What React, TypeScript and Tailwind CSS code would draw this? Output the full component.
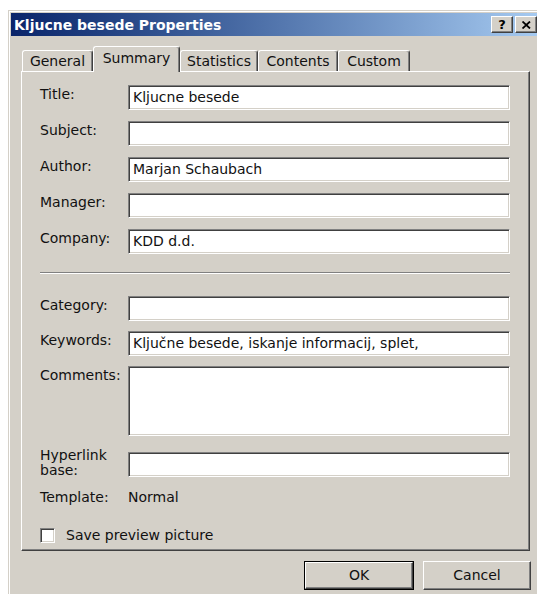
import React from "react";

// classic 3D bevels
const raised =
  "border border-t-white border-l-white border-r-[#404040] border-b-[#404040] shadow-[inset_-1px_-1px_0_#808080,inset_1px_1px_0_#d4d0c8]";
const sunken =
  "border border-t-[#808080] border-l-[#808080] border-r-white border-b-white shadow-[inset_1px_1px_0_#404040,inset_-1px_-1px_0_#d4d0c8]";

const Field = ({ label, value }: { label: string; value?: string }) => (
  <div className="flex items-start">
    <span className="w-[88px] pt-[1px] leading-[17px]">{label}</span>
    <div className={`${sunken} w-[382px] h-[25px] bg-white pl-[4px] leading-[23px] whitespace-nowrap`}>
      {value}
    </div>
  </div>
);

const tabs = ["General", "Summary", "Statistics", "Contents", "Custom"];
const tabWidths: Record<string, string> = {
  General: "w-[71px]",
  Summary: "w-[87px]",
  Statistics: "w-[78px]",
  Contents: "w-[80px]",
  Custom: "w-[72px]",
};

export default function App() {
  return (
    <div className="w-[537px] h-[594px] overflow-hidden bg-white pt-[10px] pl-[8px] font-['DejaVu_Sans',sans-serif] text-[14px] text-[#111]">
      <div className="h-[584px] w-[529px] border-l border-t border-[#d4d0c8] bg-[#d4d0c8]">
        <div className="h-full border-l border-t border-white pl-[1px] pt-[1px]">
          {/* title bar */}
          <div className="h-[23px] flex items-center justify-between pl-[3px] bg-linear-to-r from-[#0a246a] to-[#a6caf0]">
            <span className="font-bold text-white text-[14px] leading-none">Kljucne besede Properties</span>
            <div className="flex gap-[2px]">
              <div className={`${raised} w-[22px] h-[17px] bg-[#d4d0c8] flex items-center justify-center font-bold text-[13px] text-black leading-none`}>
                ?
              </div>
              <div className={`${raised} w-[22px] h-[17px] bg-[#d4d0c8] flex items-center justify-center`}>
                <svg width="9" height="8" viewBox="0 0 9 8">
                  <path d="M0.5 0.5 L8 7.5 M8 0.5 L0.5 7.5" stroke="#000" strokeWidth="1.8" />
                </svg>
              </div>
            </div>
          </div>

          {/* tab strip */}
          <div className="flex items-end h-[25px] mt-[10px] pl-[11px]">
            {tabs.map((t) => {
              const active = t === "Summary";
              return (
                <div
                  key={t}
                  className={`${tabWidths[t]} flex justify-center whitespace-nowrap leading-[17px] border-t border-l border-white border-r border-r-[#404040] rounded-t-[3px] shadow-[inset_-1px_0_0_#808080] bg-[#d4d0c8] ${
                    active ? "h-[26px] -mb-[1px] relative z-10 pt-[3px]" : "h-[21px] pt-[2px]"
                  }`}
                >
                  {t}
                </div>
              );
            })}
          </div>

          {/* tab page */}
          <div className="ml-[10px] w-[509px] h-[480px] border border-t-white border-l-white border-r-[#404040] border-b-[#404040] shadow-[inset_-1px_-1px_0_#808080] pl-[18px] pt-[13px]">
            <div className="flex flex-col gap-[11px]">
              <Field label="Title:" value="Kljucne besede" />
              <Field label="Subject:" />
              <Field label="Author:" value="Marjan Schaubach" />
              <Field label="Manager:" />
              <Field label="Company:" value="KDD d.d." />
            </div>

            <div className="mt-[18px] w-[470px] h-[2px] border-t border-t-[#808080] border-b border-b-white" />

            <div className="mt-[22px] flex flex-col gap-[10px]">
              <Field label="Category:" />
              <Field label="Keywords:" value="Ključne besede, iskanje informacij, splet," />
              <div className="flex items-start">
                <span className="w-[88px] pt-[1px] leading-[17px]">Comments:</span>
                <div className={`${sunken} w-[382px] h-[70px] bg-white`} />
              </div>
            </div>

            <div className="mt-[16px] flex items-start">
              <span className="w-[88px] -mt-[4px] leading-[15px]">
                Hyperlink
                <br />
                base:
              </span>
              <div className={`${sunken} w-[382px] h-[25px] bg-white`} />
            </div>

            <div className="mt-[11px] flex leading-[16px]">
              <span className="w-[88px]">Template:</span>
              <span>Normal</span>
            </div>

            <label className="mt-[22px] flex items-center leading-[16px]">
              <span className={`${sunken} w-[15px] h-[15px] bg-white mr-[11px]`} />
              Save preview picture
            </label>
          </div>

          {/* dialog buttons */}
          <div className="mt-[10px] flex justify-end gap-[9px] pr-[6px]">
            <div className="w-[110px] h-[29px] border border-black">
              <div className={`${raised} h-full bg-[#d4d0c8] flex items-center justify-center`}>OK</div>
            </div>
            <div className={`${raised} w-[108px] h-[29px] bg-[#d4d0c8] flex items-center justify-center`}>
              Cancel
            </div>
          </div>
        </div>
      </div>
    </div>
  );
}
